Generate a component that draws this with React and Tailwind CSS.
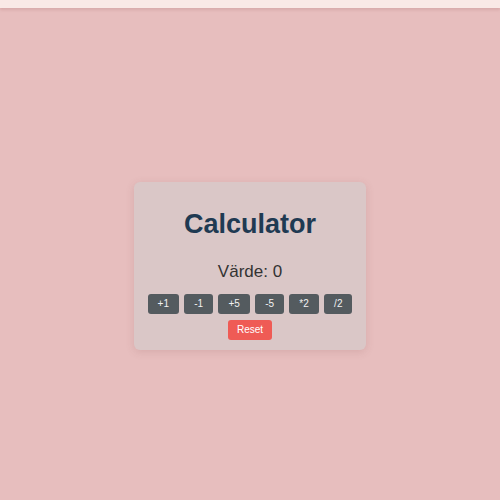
import React, { useState } from "react";

const ops = [
    { label: "+1", fn: (v) => v + 1 },
    { label: "-1", fn: (v) => v - 1 },
    { label: "+5", fn: (v) => v + 5 },
    { label: "-5", fn: (v) => v - 5 },
    { label: "*2", fn: (v) => v * 2 },
    { label: "/2", fn: (v) => v / 2 },
];

export default function App() {
    const [value, setValue] = useState(0);

    return (
        <div className="min-h-screen bg-[#e7bebe] font-['Liberation_Sans',Arial,sans-serif]">
            {/* top bar */}
            <div className="h-[8px] bg-[#f9e9e6] shadow-[0_2px_3px_rgba(150,80,80,0.18)]"></div>

            <div className="flex justify-center pt-[174px]">
                <div className="rounded-[6px] bg-[#dac7c7] px-[14px] pt-[27px] pb-[10px] shadow-[0_2px_8px_rgba(120,60,60,0.15)] flex flex-col items-center">
                    <h1 className="text-[27px] leading-[31px] font-bold text-[#1f3a52]">Calculator</h1>

                    <p className="mt-[22px] text-[17px] leading-[19px] text-[#333]">Värde: {value}</p>

                    <div className="mt-[13px] flex gap-[5.3px]">
                        {ops.map((op) => (
                            <button
                                key={op.label}
                                onClick={() => setValue(op.fn(value))}
                                className="h-[20px] px-[10px] rounded-[3px] bg-[#545b5f] text-[#f2f2f2] text-[10px] leading-[12px]"
                            >
                                {op.label}
                            </button>
                        ))}
                    </div>

                    <button
                        onClick={() => setValue(0)}
                        className="mt-[6px] h-[20px] px-[9px] rounded-[3px] bg-[#ef5b55] text-white text-[10px] leading-[12px]"
                    >
                        Reset
                    </button>
                </div>
            </div>
        </div>
    );
}
